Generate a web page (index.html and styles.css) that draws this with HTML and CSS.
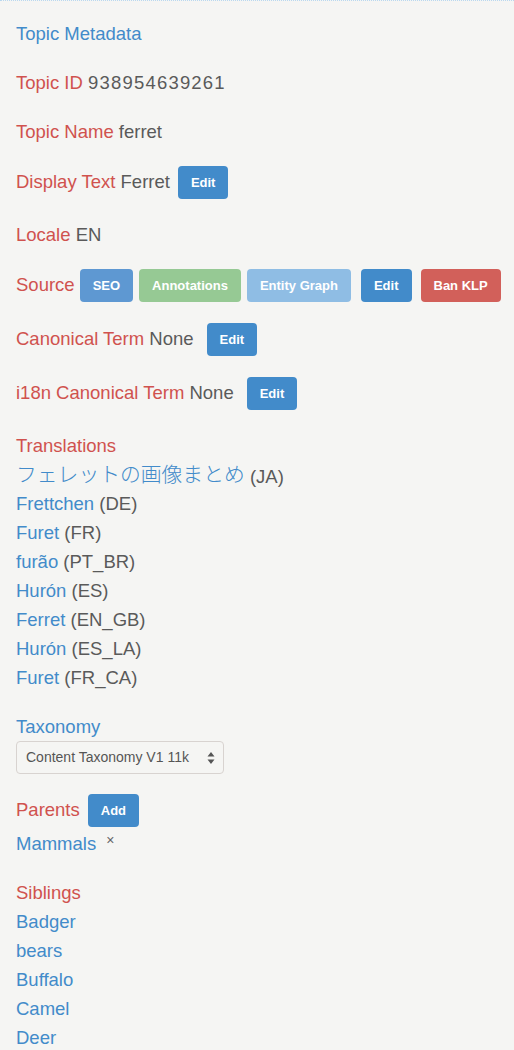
FILE: index.html
```html
<!DOCTYPE html>
<html>
<head>
<meta charset="utf-8">
<link rel="stylesheet" href="styles.css">
</head>
<body>
<div class="page">
  <div class="row"><span class="title">Topic Metadata</span></div>
  <div class="row"><span class="label">Topic ID</span> <span class="val digits">938954639261</span></div>
  <div class="row"><span class="label">Topic Name</span> <span class="val">ferret</span></div>
  <div class="row bar"><span class="txt"><span class="label">Display Text</span> <span class="val">Ferret</span></span><span class="btn primary g8">Edit</span></div>
  <div class="row"><span class="label">Locale</span> <span class="val">EN</span></div>
  <div class="row bar"><span class="txt label">Source</span><span class="btn seo g5">SEO</span><span class="btn green g6">Annotations</span><span class="btn info g6">Entity Graph</span><span class="btn primary g10">Edit</span><span class="btn danger g9">Ban KLP</span></div>
  <div class="row bar"><span class="txt"><span class="label">Canonical Term</span> <span class="val">None</span></span><span class="btn primary g13">Edit</span></div>
  <div class="row bar"><span class="txt"><span class="label">i18n Canonical Term</span> <span class="val">None</span></span><span class="btn primary g13">Edit</span></div>
  <div class="row">
    <div class="label line">Translations</div>
    <div class="line"><span class="link cjk">フェレットの画像まとめ</span> <span class="val">(JA)</span></div>
    <div class="line"><span class="link">Frettchen</span> <span class="val">(DE)</span></div>
    <div class="line"><span class="link">Furet</span> <span class="val">(FR)</span></div>
    <div class="line"><span class="link">furão</span> <span class="val">(PT_BR)</span></div>
    <div class="line"><span class="link">Hurón</span> <span class="val">(ES)</span></div>
    <div class="line"><span class="link">Ferret</span> <span class="val">(EN_GB)</span></div>
    <div class="line"><span class="link">Hurón</span> <span class="val">(ES_LA)</span></div>
    <div class="line"><span class="link">Furet</span> <span class="val">(FR_CA)</span></div>
  </div>
  <div class="row">
    <div class="title">Taxonomy</div>
    <div class="select">
      <span>Content Taxonomy V1 11k</span>
      <svg class="arrows" width="8" height="14" viewBox="0 0 8 14"><path d="M4 1 L7.5 5.5 L0.5 5.5 Z M4 13 L7.5 8.5 L0.5 8.5 Z" fill="#555"/></svg>
    </div>
  </div>
  <div class="row">
    <div class="bar tall"><span class="txt label">Parents</span><span class="btn primary g8">Add</span></div>
    <div class="line"><span class="link">Mammals</span> <span class="remove">×</span></div>
  </div>
  <div class="row">
    <div class="label line">Siblings</div>
    <div class="link line">Badger</div>
    <div class="link line">bears</div>
    <div class="link line">Buffalo</div>
    <div class="link line">Camel</div>
    <div class="link line">Deer</div>
  </div>
</div>
</body>
</html>
```
FILE: styles.css
```css
html, body {
  margin: 0;
  padding: 0;
  background: #f5f5f3;
}
body {
  border-top: 1px dotted #b9d8ef;
  font-family: "Liberation Sans", Arial, "Noto Sans CJK JP", sans-serif;
  font-size: 18.5px;
  line-height: 29px;
  color: #555;
}
.page {
  padding: 18px 0 0 16px;
}
.row {
  margin-bottom: 20px;
}
.line {
  height: 29px;
}
.bar {
  display: flex;
  align-items: flex-start;
  height: 34px;
  white-space: nowrap;
}
.bar.tall {
  height: 35px;
}
.txt {
  line-height: 32px;
}
.title, .link {
  color: #428bca;
}
.label {
  color: #d0524e;
}
.val {
  color: #5a5a5a;
}
.digits {
  letter-spacing: 1.2px;
}
.cjk {
  font-family: "Noto Sans CJK JP", sans-serif;
  font-size: 20.8px;
  font-weight: 300;
  position: relative;
  top: -1px;
}
.btn {
  display: inline-block;
  height: 33px;
  line-height: 33px;
  padding: 0 13px;
  border-radius: 4px;
  font-size: 13px;
  font-weight: bold;
  color: #fff;
}
.primary { background: #428bca; }
.seo { background: #5e98d2; }
.green { background: #96c994; }
.info { background: #8fbde4; }
.danger { background: #d2605a; }
.g5 { margin-left: 5px; }
.g6 { margin-left: 6px; }
.g8 { margin-left: 8px; }
.g9 { margin-left: 9px; }
.g10 { margin-left: 10px; }
.g13 { margin-left: 13px; }
.select {
  box-sizing: border-box;
  width: 208px;
  height: 33px;
  border: 1px solid #d8d3d0;
  border-radius: 4px;
  display: flex;
  align-items: center;
  justify-content: space-between;
  padding: 0 8px 0 9px;
  font-size: 14px;
  color: #555;
}
.arrows {
  display: block;
}
.remove {
  font-size: 14px;
  color: #666;
  position: relative;
  top: -5px;
  margin-left: 5px;
}
```
